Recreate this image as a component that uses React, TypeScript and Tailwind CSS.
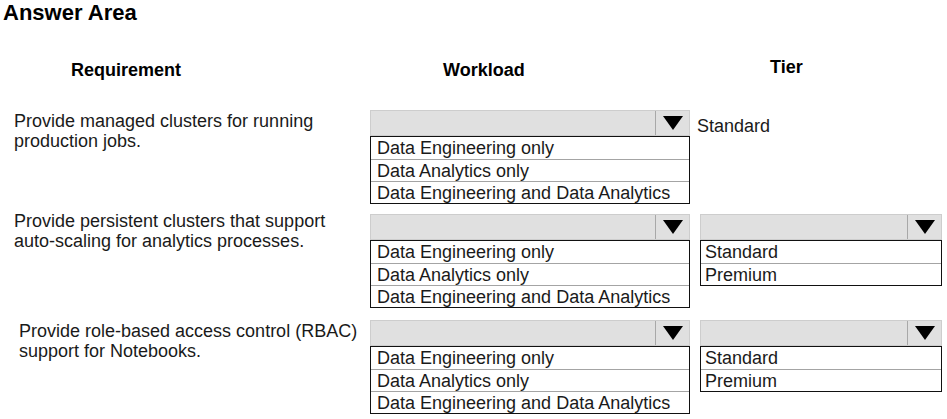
import React from "react";

const workloads = [
  "Data Engineering only",
  "Data Analytics only",
  "Data Engineering and Data Analytics",
];
const tiers = ["Standard", "Premium"];

function Caret() {
  return (
    <svg width="20" height="14" viewBox="0 0 20 14" aria-hidden="true">
      <polygon points="0,0 20,0 10,14" fill="#000" />
    </svg>
  );
}

function DropDown({
  items,
  width,
  textPad,
}: {
  items: string[];
  width: string;
  textPad: string;
}) {
  return (
    <div className={`flex flex-col ${width}`}>
      <div className="flex h-[26px] border border-[#cdcdcd] bg-[#e0e0e0]">
        <div className="flex-1" />
        <div className="flex w-[34px] items-center justify-center border-l border-[#a8a8a8]">
          <Caret />
        </div>
      </div>
      <div className="border border-[#111] bg-white">
        {items.map((item, i) => (
          <div
            className={`h-[22px] whitespace-nowrap leading-[23px] ${textPad} ${
              i > 0 ? "border-t border-[#a4a4a4]" : ""
            }`}
            key={item}
          >
            {item}
          </div>
        ))}
      </div>
    </div>
  );
}

function Row({
  lines,
  indent,
  textOffset,
  fixedTier,
  className,
}: {
  lines: string[];
  indent: string;
  textOffset: string;
  fixedTier?: string;
  className: string;
}) {
  return (
    <div className={`flex items-start ${className}`}>
      <div className={`w-[370px] shrink-0 leading-[20px] ${indent} ${textOffset}`}>
        {lines.map((l) => (
          <div className="whitespace-nowrap" key={l}>
            {l}
          </div>
        ))}
      </div>
      <DropDown items={workloads} textPad="pl-[6px]" width="w-[320px]" />
      {fixedTier ? (
        <div className="ml-[7px] mt-[6px] leading-[20px]">{fixedTier}</div>
      ) : (
        <div className="ml-[10px]">
          <DropDown items={tiers} textPad="pl-[4px]" width="w-[242px]" />
        </div>
      )}
    </div>
  );
}

export default function App() {
  return (
    <div className="h-[419px] w-[947px] overflow-hidden bg-white font-['Liberation_Sans',Arial,sans-serif] text-[18px] text-[#1a1a1a]">
      <h1 className="pl-[3px] pt-[1px] text-[22px] font-bold leading-[24px] text-black">
        Answer Area
      </h1>
      <div className="mt-[32px] flex h-[23px] items-start font-bold leading-[20px] text-black">
        <div className="mt-[3px] w-[443px] pl-[71px]">Requirement</div>
        <div className="mt-[3px] w-[327px]">Workload</div>
        <div>Tier</div>
      </div>
      <Row
        className="mt-[30px]"
        fixedTier="Standard"
        indent="pl-[14px]"
        lines={["Provide managed clusters for running", "production jobs."]}
        textOffset="mt-[1px]"
      />
      <Row
        className="mt-[10px]"
        indent="pl-[14px]"
        lines={[
          "Provide persistent clusters that support",
          "auto-scaling for analytics processes.",
        ]}
        textOffset="-mt-[3px]"
      />
      <Row
        className="mt-[12px]"
        indent="pl-[19px]"
        lines={["Provide role-based access control (RBAC)", "support for Notebooks."]}
        textOffset="mt-[1px]"
      />
    </div>
  );
}
